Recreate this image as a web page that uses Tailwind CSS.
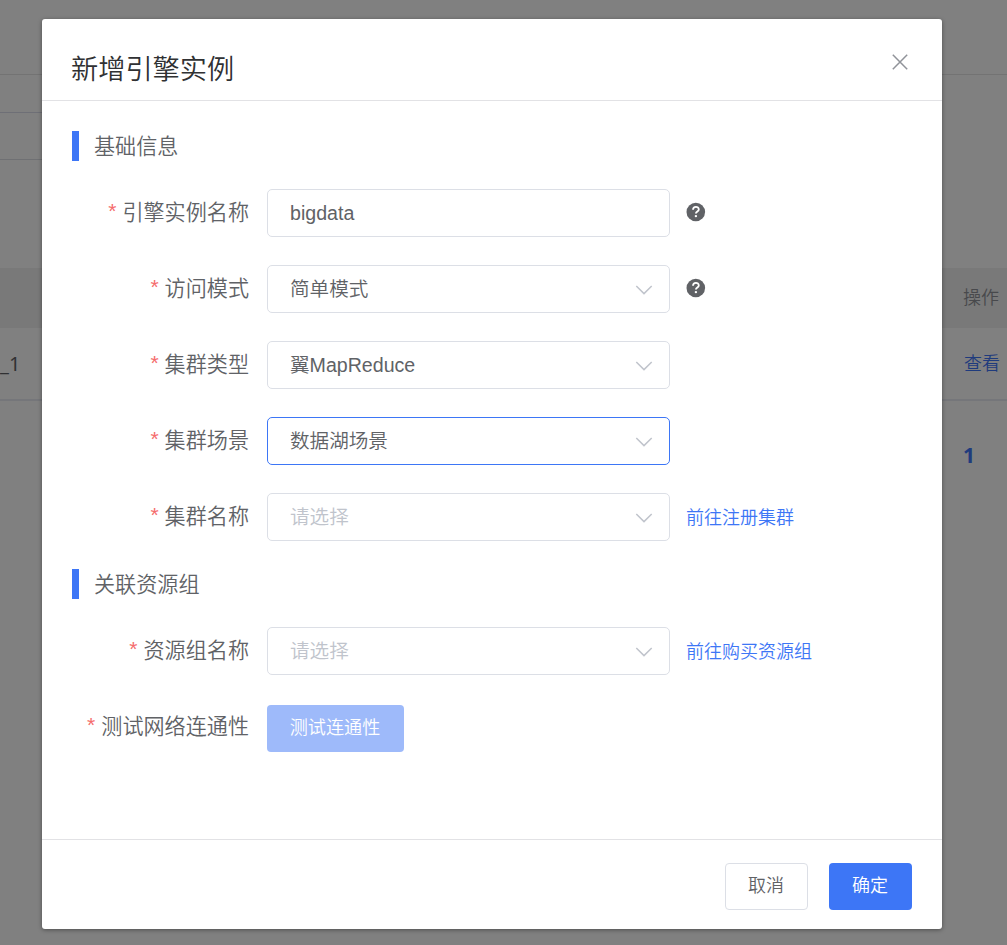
<!DOCTYPE html>
<html lang="zh-CN">
<head>
<meta charset="utf-8">
<title>新增引擎实例</title>
<script src="https://cdn.jsdelivr.net/npm/@tailwindcss/browser@4"></script>
</head>
<body class="h-[945px] overflow-hidden bg-[#808080] font-['Liberation_Sans','Noto_Sans_CJK_SC',sans-serif] font-[350] text-[#606266]">
<svg class="hidden">
  <symbol id="chev" viewBox="0 0 18 10"><path d="M1.3 1 L9 8.6 L16.7 1" fill="none" stroke="#c0c4cc" stroke-width="1.5"/></symbol>
  <symbol id="help" viewBox="0 0 20 20"><circle cx="9.8" cy="10" r="9.3" fill="#606266"/><path d="M7 7.8 C7.1 4 12.8 4.1 12.8 7.4 C12.8 9.4 9.9 9.5 9.9 11.5" fill="none" stroke="#fff" stroke-width="1.8"/><circle cx="9.9" cy="14.1" r="1.2" fill="#fff"/></symbol>
</svg>

<!-- Page behind the dialog -->
<div class="flex h-full flex-col">
  <div class="h-[75px] shrink-0 border-b border-[#737373]"></div>
  <div class="h-[85px] w-[60px] shrink-0 border-b border-[#6f7073] pt-[37px]"><div class="border-t border-[#6e6f76]"></div></div>
  <div class="h-[108px] shrink-0"></div>
  <div class="flex h-[60px] shrink-0 items-center justify-end bg-[#797979] pt-px pr-[8px] text-[18px] text-[#48494c]">操作</div>
  <div class="flex h-[73px] shrink-0 items-center justify-between border-b-2 border-[#75767a] pt-px pr-[7px] text-[18px]">
    <span class="pb-px font-['Noto_Sans'] text-[20px] font-normal text-[#303133]">_1</span><span class="text-[#1f3b7d]">查看</span>
  </div>
  <div class="flex h-[109px] shrink-0 items-center justify-end pr-[32px] font-['Open_Sans'] text-[21px] font-bold text-[#1f3b7d]">1</div>
</div>

<!-- Dialog -->
<div class="absolute left-[42px] top-[19px] flex h-[910px] w-[900px] flex-col rounded-[3px] bg-white shadow-[0_1px_4px_rgba(0,0,0,0.4)]">
  <header class="flex h-[82px] shrink-0 items-start justify-between border-b border-[#e2e2e5] pl-[29px] pr-[34px]">
    <h1 class="pt-[31px] text-[27.2px] leading-[40px] text-[#303133]">新增引擎实例</h1>
    <svg class="mt-[35px] size-4" viewBox="0 0 16 16"><path d="M.8.8 L15.2 15.2 M15.2.8 L.8 15.2" stroke="#909399" stroke-width="1.5"/></svg>
  </header>

  <main class="flex-1 pt-[30px] pl-[30px] text-[21.1px]">
    <h2 class="flex h-[30px] items-center gap-[15px]"><i class="h-[30px] w-[7px] bg-[#3d76f6]"></i><span class="pt-px">基础信息</span></h2>
    <div class="mt-[28px] flex flex-col gap-[28px]">
      <div class="flex h-[48px] items-center">
        <label class="w-[177px] whitespace-nowrap text-right"><span class="mr-[6px] align-[2px] leading-none text-[#f56c6c]">*</span>引擎实例名称</label>
        <div class="ml-[18px] flex h-full w-[403px] items-center rounded-[5px] border border-[#dcdfe6] pt-[2px] pl-[22px] text-[19.6px]">bigdata</div>
        <svg class="ml-[16px] -mt-[2px] size-5"><use href="#help"/></svg>
      </div>
      <div class="flex h-[48px] items-center">
        <label class="w-[177px] whitespace-nowrap text-right"><span class="mr-[6px] align-[2px] leading-none text-[#f56c6c]">*</span>访问模式</label>
        <div class="ml-[18px] flex h-full w-[403px] items-center justify-between rounded-[5px] border border-[#dcdfe6] pt-[2px] pl-[22px] pr-[16px] text-[19.6px]">简单模式<svg class="h-[10px] w-[18px]"><use href="#chev"/></svg></div>
        <svg class="ml-[16px] -mt-[2px] size-5"><use href="#help"/></svg>
      </div>
      <div class="flex h-[48px] items-center">
        <label class="w-[177px] whitespace-nowrap text-right"><span class="mr-[6px] align-[2px] leading-none text-[#f56c6c]">*</span>集群类型</label>
        <div class="ml-[18px] flex h-full w-[403px] items-center justify-between rounded-[5px] border border-[#dcdfe6] pt-[2px] pl-[22px] pr-[16px] text-[19.6px]">翼MapReduce<svg class="h-[10px] w-[18px]"><use href="#chev"/></svg></div>
      </div>
      <div class="flex h-[48px] items-center">
        <label class="w-[177px] whitespace-nowrap text-right"><span class="mr-[6px] align-[2px] leading-none text-[#f56c6c]">*</span>集群场景</label>
        <div class="ml-[18px] flex h-full w-[403px] items-center justify-between rounded-[5px] border border-[#3d76f6] pt-[2px] pl-[22px] pr-[16px] text-[19.6px]">数据湖场景<svg class="h-[10px] w-[18px]"><use href="#chev"/></svg></div>
      </div>
      <div class="flex h-[48px] items-center">
        <label class="w-[177px] whitespace-nowrap text-right"><span class="mr-[6px] align-[2px] leading-none text-[#f56c6c]">*</span>集群名称</label>
        <div class="ml-[18px] flex h-full w-[403px] items-center justify-between rounded-[5px] border border-[#dcdfe6] pt-[2px] pl-[22px] pr-[16px] text-[19.6px] text-[#c0c4cc]">请选择<svg class="h-[10px] w-[18px]"><use href="#chev"/></svg></div>
        <a class="ml-[16px] pt-[2px] text-[18px] text-[#3d76f6]">前往注册集群</a>
      </div>
    </div>

    <h2 class="mt-[28px] flex h-[30px] items-center gap-[15px]"><i class="h-[30px] w-[7px] bg-[#3d76f6]"></i><span class="pt-px">关联资源组</span></h2>
    <div class="mt-[28px] flex flex-col gap-[30px]">
      <div class="flex h-[48px] items-center">
        <label class="w-[177px] whitespace-nowrap text-right"><span class="mr-[6px] align-[2px] leading-none text-[#f56c6c]">*</span>资源组名称</label>
        <div class="ml-[18px] flex h-full w-[403px] items-center justify-between rounded-[5px] border border-[#dcdfe6] pt-[2px] pl-[22px] pr-[16px] text-[19.6px] text-[#c0c4cc]">请选择<svg class="h-[10px] w-[18px]"><use href="#chev"/></svg></div>
        <a class="ml-[16px] pt-[2px] text-[18px] text-[#3d76f6]">前往购买资源组</a>
      </div>
      <div class="flex h-[47px] items-center">
        <label class="w-[177px] -mt-[3px] whitespace-nowrap text-right"><span class="mr-[6px] align-[2px] leading-none text-[#f56c6c]">*</span>测试网络连通性</label>
        <button class="ml-[18px] h-full w-[137px] rounded-[4px] bg-[#9ebafa] pr-px text-[18.1px] text-white">测试连通性</button>
      </div>
    </div>
  </main>

  <footer class="flex h-[90px] shrink-0 items-start justify-end gap-[21px] border-t border-[#e2e2e5] pt-[23px] pr-[30px] text-[18px]">
    <button class="h-[47px] w-[83px] rounded-[4px] border border-[#dcdfe6] bg-white pr-px">取消</button>
    <button class="h-[47px] w-[83px] rounded-[4px] bg-[#3d76f6] pr-px text-white">确定</button>
  </footer>
</div>
</body>
</html>
